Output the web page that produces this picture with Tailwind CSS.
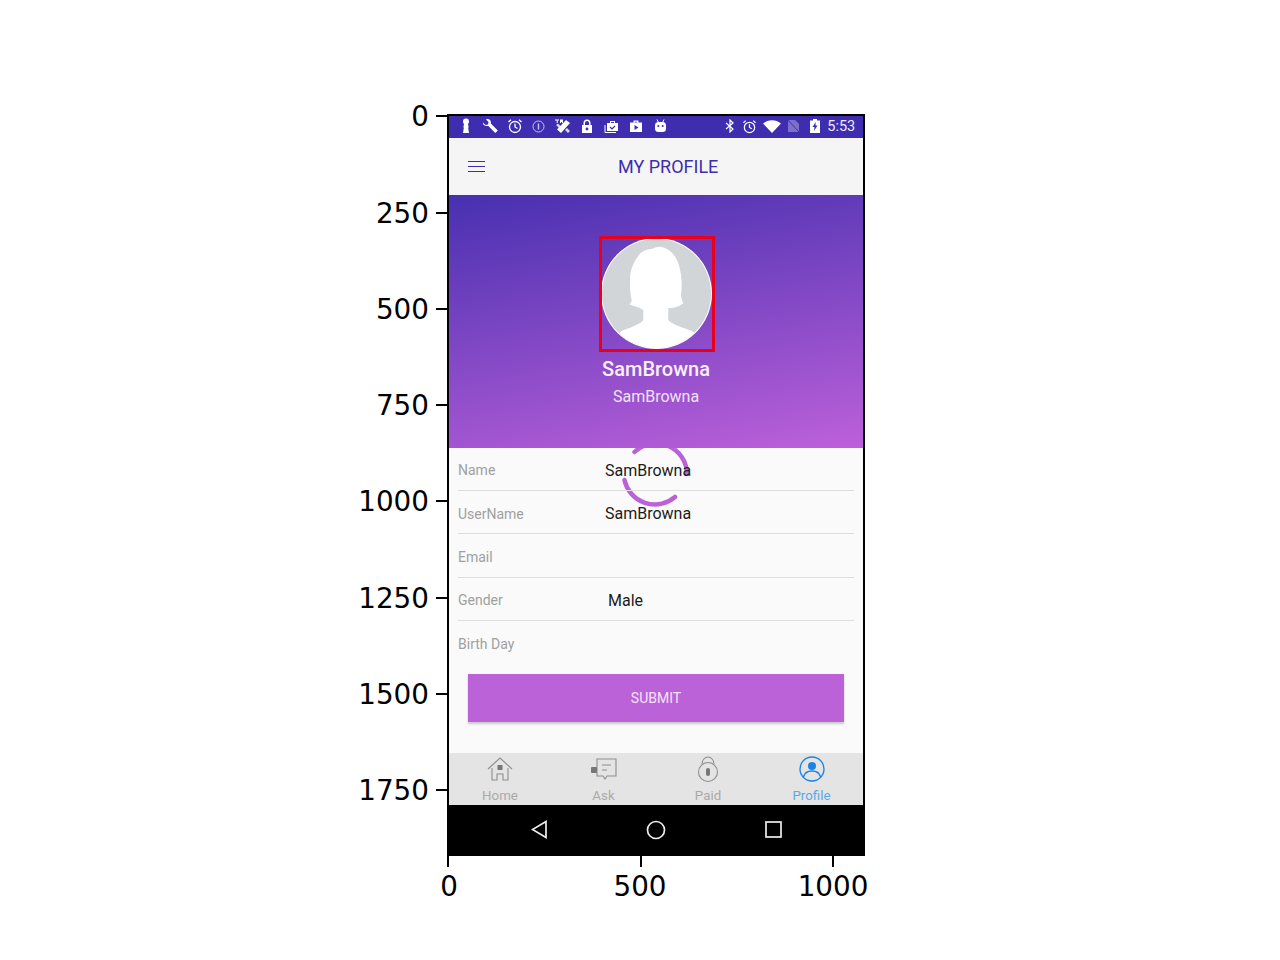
<!DOCTYPE html>
<html lang="en">
<head>
    <meta charset="UTF-8">
    <title>My Profile</title>
    <script src="https://cdn.jsdelivr.net/npm/@tailwindcss/browser@4"></script>
</head>
<body class="bg-white w-[1280px] h-[960px] overflow-hidden pl-[447px] pt-[114px] font-['Roboto',sans-serif]">
    <div class="relative w-[418px] h-[742px] border-2 border-black">
        <!-- Y axis ticks -->
        <div class="absolute left-[-13px] top-[-1px] w-[11px] h-[2px] bg-black"></div>
        <div class="absolute left-[-13px] top-[96px] w-[11px] h-[2px] bg-black"></div>
        <div class="absolute left-[-13px] top-[192px] w-[11px] h-[2px] bg-black"></div>
        <div class="absolute left-[-13px] top-[288px] w-[11px] h-[2px] bg-black"></div>
        <div class="absolute left-[-13px] top-[384px] w-[11px] h-[2px] bg-black"></div>
        <div class="absolute left-[-13px] top-[481px] w-[11px] h-[2px] bg-black"></div>
        <div class="absolute left-[-13px] top-[577px] w-[11px] h-[2px] bg-black"></div>
        <div class="absolute left-[-13px] top-[673px] w-[11px] h-[2px] bg-black"></div>
        <div class="font-['DejaVu_Sans',sans-serif] text-[27.8px] leading-[32px] text-black">
            <div class="absolute right-[434px] top-[-15px]">0</div>
            <div class="absolute right-[434px] top-[82px]">250</div>
            <div class="absolute right-[434px] top-[178px]">500</div>
            <div class="absolute right-[434px] top-[274px]">750</div>
            <div class="absolute right-[434px] top-[370px]">1000</div>
            <div class="absolute right-[434px] top-[467px]">1250</div>
            <div class="absolute right-[434px] top-[563px]">1500</div>
            <div class="absolute right-[434px] top-[659px]">1750</div>
            <div class="absolute left-[-10px] top-[755px] w-[20px] text-center">0</div>
            <div class="absolute left-[151px] top-[755px] w-[80px] text-center">500</div>
            <div class="absolute left-[339px] top-[755px] w-[90px] text-center">1000</div>
        </div>
        <!-- X axis ticks -->
        <div class="absolute left-[-2px] top-[740px] w-[2px] h-[11px] bg-black"></div>
        <div class="absolute left-[191px] top-[740px] w-[2px] h-[11px] bg-black"></div>
        <div class="absolute left-[383px] top-[740px] w-[2px] h-[11px] bg-black"></div>

        <div class="flex flex-col h-full">
            <!-- Status bar -->
            <div class="h-[22px] bg-[#3f2db0] flex items-center pb-[2px] text-white">
                <div class="flex items-center ml-[5px]">
                    <div class="w-[24.25px] flex justify-center">
                        <svg width="12" height="16" viewBox="0 0 12 16" fill="#fff"><circle cx="6" cy="3.5" r="3"/><path d="M4 6h4l.6 3-.4 1 .8 5H3l.8-5-.4-1z"/></svg>
                    </div>
                    <div class="w-[24.25px] flex justify-center">
                        <svg width="17" height="16" viewBox="0 0 17 16" fill="#fff"><path d="M1 4.500 3.500 7 6 6.500 6.500 4 4 1.500C6 .5 8.500 1.500 9 4c0 .7 0 1-.2 1.500l7 7-2.500 2.500-7-7C3.500 8.500.5 7 1 4.500z"/></svg>
                    </div>
                    <div class="w-[24.25px] flex justify-center">
                        <svg width="16" height="16" viewBox="0 0 16 16" fill="none" stroke="#fff" stroke-width="1.300"><circle cx="8" cy="9" r="5.500"/><path d="M8 5.500V9l2.500 1.500M1.500 4 4 1.700M14.500 4 12 1.700"/></svg>
                    </div>
                    <div class="w-[24.25px] flex justify-center">
                        <svg width="13" height="13" viewBox="0 0 13 13" fill="none" stroke="#c9c2ee" stroke-width="1"><circle cx="6.500" cy="6.500" r="5.500"/><path d="M6.500 3.500v6" stroke-width="1.500"/></svg>
                    </div>
                    <div class="w-[24.25px] flex justify-center">
                        <svg width="18" height="17" viewBox="0 0 18 17" fill="#fff"><path d="M1 1.500h4v1H3.700V5h-1V2.500H1zM6 1.500h3v3.500H8V4H7v1H6z"/><path d="M12 2l4 3-9 10-4-3.500z"/><path d="M2 7l2-1.500 3 3-2 1.500zM11 12l2-2 3 3-2 2z" opacity=".8"/></svg>
                    </div>
                    <div class="w-[24.25px] flex justify-center">
                        <svg width="12" height="15" viewBox="0 0 12 15"><path fill="#fff" d="M1 6h1.500V4a3.500 3.500 0 0 1 7 0v2H11v8H1z"/><path fill="#3f2db0" d="M4 6V4a2 2 0 0 1 4 0v2z"/><circle cx="6" cy="10" r="1.400" fill="#3f2db0"/></svg>
                    </div>
                    <div class="w-[24.25px] flex justify-center">
                        <svg width="16" height="15" viewBox="0 0 16 15"><path fill="#fff" d="M3 4h3V2h5v2h3v8H3z"/><path fill="none" stroke="#fff" d="M1 6v7.500h11"/><path fill="none" stroke="#3f2db0" stroke-width="1.200" d="M6 8l2 2 3-3"/><path fill="#3f2db0" d="M7 3h3v1H7z"/></svg>
                    </div>
                    <div class="w-[24.25px] flex justify-center">
                        <svg width="14" height="14" viewBox="0 0 14 14"><path fill="#fff" d="M1 3.500h3.500V1.500h5v2H13V13H1z"/><path fill="#3f2db0" d="M5.500 6l4 2.500-4 2.500zM5.700 2.700h2.600v.8H5.700z"/></svg>
                    </div>
                    <div class="w-[24.25px] flex justify-center">
                        <svg width="13" height="15" viewBox="0 0 13 15" fill="#fff"><path d="M3 0.500l1.500 3h4l1.500-3" fill="none" stroke="#fff"/><rect x="1" y="3" width="11" height="10" rx="3.500"/><circle cx="4.300" cy="7" r="1" fill="#3f2db0"/><circle cx="8.700" cy="7" r="1" fill="#3f2db0"/></svg>
                    </div>
                </div>
                <div class="flex items-center ml-[53px]">
                    <svg width="10" height="14" viewBox="0 0 10 14" fill="none" stroke="#fff" stroke-width="1.200"><path d="M1 4l7 6-3 3V1l3 3-7 6"/></svg>
                    <svg class="ml-[7px]" width="15" height="15" viewBox="0 0 16 16" fill="none" stroke="#fff" stroke-width="1.300"><circle cx="8" cy="9" r="5.500"/><path d="M8 5.500V9l2.500 1.500M1.500 4 4 1.700M14.500 4 12 1.700"/></svg>
                    <svg class="ml-[6px]" width="18" height="13" viewBox="0 0 18 13" fill="#fff"><path d="M0 3.500C5-1 13-1 18 3.500L9 13z"/></svg>
                    <svg class="ml-[6px]" width="13" height="14" viewBox="0 0 13 14"><path fill="#7d70c9" d="M1 1h7l4 4v8H1z"/><path stroke="#3f2db0" d="M0 0l13 14"/></svg>
                    <svg class="ml-[10px]" width="10" height="14" viewBox="0 0 10 14"><path fill="#fff" d="M3 0h4v1.500h3V14H0V1.500h3z"/><path fill="#3f2db0" d="M5.700 3L2.500 8h2l-.5 4 3.500-5.500h-2z"/></svg>
                    <span class="ml-[7px] mt-[3px] text-[14.500px] leading-none text-[#ece9fa]">5:53</span>
                </div>
            </div>

            <!-- Header -->
            <div class="h-[57px] bg-[#f5f5f5] flex items-center pl-[19px]">
                <svg width="17" height="13" viewBox="0 0 17 13" stroke="#3f2db0" stroke-width="1"><path d="M0 1.500h17M0 6.500h17M0 11.500h17"/></svg>
                <h1 class="ml-[133px] mt-[1px] text-[18px] leading-none text-[#3f2db0]">MY PROFILE</h1>
            </div>

            <!-- Profile banner -->
            <div class="h-[253px] bg-linear-[170deg] from-[#4730b0] to-[#bd60da] flex flex-col items-center pt-[41px]">
                <div class="ml-[2px] w-[116px] h-[116px] border-[3px] border-[#e8001c] shrink-0">
                    <svg width="110" height="110" viewBox="3 3 110 110">
                        <circle cx="57.500" cy="57.500" r="55.500" fill="#fff"/>
                        <circle cx="57.500" cy="57.500" r="54.500" fill="#d1d5d8"/>
                        <clipPath id="avatarClip"><circle cx="57.500" cy="57.500" r="54.500"/></clipPath>
                        <path clip-path="url(#avatarClip)" fill="#fff" d="M52.700 13C47 13.500 43 15 40 19C35 25 31 34 31 43C31 50 31 58 32.700 64C32.500 66 31.500 67.500 30.300 68.300C33 70 39 70.500 44.300 74L44.300 84C42 88 30 92 21 95.700L10 120H105L94.300 95.700C85 92 72 88 69.300 84L69.300 72.300C75 72 81 70.500 84.300 67.300C83 64 82 61 82 59C83 50 83.500 40 79.300 27.300C77 21 72 12 61 10.700C58 10.500 55 11.500 52.700 13Z"/>
                    </svg>
                </div>
                <div class="mt-[5px] text-[20px] leading-[24px] font-medium text-[#f8f0fc]">SamBrowna</div>
                <div class="mt-[6px] text-[16px] leading-[20px] text-[#efe2f7]">SamBrowna</div>
            </div>

            <!-- Form -->
            <div class="relative flex-1 bg-[#fafafa] overflow-hidden px-[9px]">
                <svg class="absolute left-[172px] top-[-10px]" width="70" height="70" viewBox="0 0 70 70" fill="none" stroke="#bb62d9" stroke-width="4.500" stroke-linecap="round">
                    <path d="M13.500 14A31 31 0 0 1 66 36"/>
                    <path d="M3.500 42A31 31 0 0 0 54 59"/>
                </svg>
                <div class="relative h-[43px] flex items-center border-b border-[#dedede]">
                    <span class="w-[147px] text-[14px] text-[#a0a0a0] pt-[3px]">Name</span>
                    <span class="text-[16px] text-[#1c1c1c] pt-[3px]">SamBrowna</span>
                </div>
                <div class="relative h-[43px] flex items-center border-b border-[#dedede]">
                    <span class="w-[147px] text-[14px] text-[#a0a0a0] pt-[4px]">UserName</span>
                    <span class="text-[16px] text-[#1c1c1c] pt-[3px]">SamBrowna</span>
                </div>
                <div class="relative h-[44px] flex items-center border-b border-[#dedede]">
                    <span class="w-[147px] text-[14px] text-[#a0a0a0] pt-[4px]">Email</span>
                </div>
                <div class="relative h-[43px] flex items-center border-b border-[#dedede]">
                    <span class="w-[150px] text-[14px] text-[#a0a0a0] pt-[3px]">Gender</span>
                    <span class="text-[16px] text-[#1c1c1c] pt-[3px]">Male</span>
                </div>
                <div class="relative h-[44px] flex items-center">
                    <span class="text-[14px] text-[#a0a0a0] pt-[2px]">Birth Day</span>
                </div>
                <button class="block mx-[10px] mt-[9px] w-[376px] h-[48px] bg-[#bb62d9] text-[#f3e4f9] text-[14px] shadow-[0_2px_2px_rgba(0,0,0,0.2)]">SUBMIT</button>
            </div>

            <!-- Tab bar -->
            <div class="h-[52px] bg-[#e4e4e4] grid grid-cols-[102px_105px_104px_103px] text-[13.300px] leading-none text-[#aaaaaa]">
                <div class="flex flex-col items-center pt-[4px]">
                    <svg width="26" height="25" viewBox="0 0 26 25" fill="none" stroke="#8e8e8e" stroke-width="1.100"><path d="M1 12L13 1l12 11M5 11v12h5v-6h6v6h5V11"/><rect x="10.500" y="8" width="5" height="5" fill="#777" stroke="none"/></svg>
                    <span class="mt-[7px]">Home</span>
                </div>
                <div class="flex flex-col items-center pt-[4px]">
                    <svg width="26" height="25" viewBox="0 0 26 25" fill="none" stroke="#8e8e8e" stroke-width="1.100"><path d="M6 2h19v17H16l-2 3-2-3H6z"/><path d="M11 8h9M11 13h5"/><rect x="0" y="10" width="6" height="6" rx="1" fill="#777" stroke="none"/></svg>
                    <span class="mt-[7px]">Ask</span>
                </div>
                <div class="flex flex-col items-center pt-[2px]">
                    <svg width="22" height="28" viewBox="0 0 22 28" fill="none" stroke="#8e8e8e" stroke-width="1.100"><circle cx="11" cy="17" r="9.500"/><path d="M5 9C5 5 8 2 11 2s6 3 6 7"/><rect x="9" y="13" width="4" height="8" rx="2" fill="#777" stroke="none"/></svg>
                    <span class="mt-[6px]">Paid</span>
                </div>
                <div class="flex flex-col items-center pt-[3px] text-[#5aa9ea]">
                    <svg width="26" height="26" viewBox="0 0 26 26" fill="none" stroke="#1b82e6" stroke-width="1.300"><circle cx="13" cy="13" r="12"/><path d="M4.500 21c1-4 4-6 8.500-6s7.500 2 8.500 6"/><circle cx="13" cy="10" r="4" fill="#1b82e6" stroke="none"/></svg>
                    <span class="mt-[7px]">Profile</span>
                </div>
            </div>

            <!-- Android nav bar -->
            <div class="h-[49px] bg-black relative flex items-center pl-[82px]">
                <svg width="16" height="19" viewBox="0 0 16 19" fill="none" stroke="#eee" stroke-width="1.700"><path d="M15 1.500v16L1.500 9.500z"/></svg>
                <svg class="ml-[99px]" width="20" height="20" viewBox="0 0 20 20" fill="none" stroke="#eee" stroke-width="1.700"><circle cx="10" cy="10" r="8.500"/></svg>
                <svg class="ml-[99px]" width="17" height="17" viewBox="0 0 17 17" fill="none" stroke="#eee" stroke-width="1.700"><rect x="1" y="1" width="15" height="15"/></svg>
            </div>
        </div>
    </div>
</body>
</html>
